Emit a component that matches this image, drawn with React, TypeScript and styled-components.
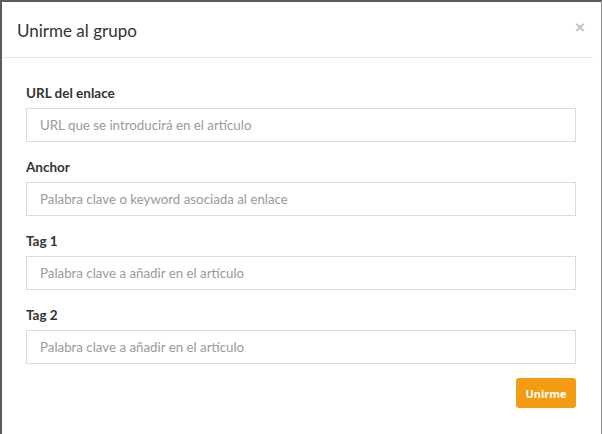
import React from 'react';
import styled, { createGlobalStyle } from 'styled-components';

const GlobalStyle = createGlobalStyle`
  html, body {
    margin: 0;
    padding: 0;
    background: #ffffff;
  }
  body {
    font-family: Lato, "Open Sans", "Liberation Sans", sans-serif;
    color: #333333;
  }
  * {
    box-sizing: border-box;
  }
`;

const Modal = styled.div`
  width: 602px;
  height: 434px;
  background: #ffffff;
  border-top: 2px solid #5c5c5c;
  border-left: 2px solid #5c5c5c;
  border-right: 1px solid #8a8a8a;
  display: flex;
  flex-direction: column;
`;

const Header = styled.div`
  height: 56px;
  display: flex;
  align-items: center;
  justify-content: space-between;
  padding: 0 8px 0 15px;
  border-bottom: 1px solid #e8e8e8;
  margin-right: 8px;
`;

const Title = styled.h4`
  margin: 0;
  font-size: 17px;
  font-weight: 400;
  color: #333333;
  padding-top: 2px;
`;

const Close = styled.button`
  border: 0;
  background: none;
  padding: 0;
  font-family: "Liberation Sans", sans-serif;
  font-size: 17px;
  font-weight: 700;
  line-height: 1;
  color: #c4c4c4;
  margin-top: -4px;
  cursor: pointer;
`;

const Body = styled.form`
  padding: 26px 25px 0 24px;
  display: flex;
  flex-direction: column;
`;

const Group = styled.div`
  display: flex;
  flex-direction: column;
  margin-bottom: 16px;
`;

const Label = styled.label`
  font-size: 13.5px;
  font-weight: 700;
  line-height: 18px;
  color: #333333;
  margin-bottom: 6px;
`;

const Input = styled.input`
  height: 34px;
  width: 100%;
  border: 1px solid #dcdcdc;
  border-radius: 0;
  padding: 0 13px;
  font-family: inherit;
  font-size: 13.3px;
  color: #555555;
  outline: none;
  &::placeholder {
    color: #9a9a9a;
  }
`;

const Footer = styled.div`
  display: flex;
  justify-content: flex-end;
  margin-top: -2px;
`;

const Button = styled.button`
  width: 60px;
  height: 30px;
  border: 0;
  border-radius: 3px;
  background: #f39c12;
  color: #ffffff;
  font-family: "Open Sans", "Liberation Sans", sans-serif;
  font-size: 11px;
  font-weight: 700;
  cursor: pointer;
`;

const fields = [
  { label: 'URL del enlace', placeholder: 'URL que se introducirá en el artículo' },
  { label: 'Anchor', placeholder: 'Palabra clave o keyword asociada al enlace' },
  { label: 'Tag 1', placeholder: 'Palabra clave a añadir en el artículo' },
  { label: 'Tag 2', placeholder: 'Palabra clave a añadir en el artículo' },
];

const App: React.FC = () => {
  return (
    <>
      <GlobalStyle />
      <Modal>
        <Header>
          <Title>Unirme al grupo</Title>
          <Close type="button">×</Close>
        </Header>
        <Body onSubmit={(e) => e.preventDefault()}>
          {fields.map((f) => (
            <Group key={f.label}>
              <Label>{f.label}</Label>
              <Input placeholder={f.placeholder} />
            </Group>
          ))}
          <Footer>
            <Button type="submit">Unirme</Button>
          </Footer>
        </Body>
      </Modal>
    </>
  );
};

export default App;
